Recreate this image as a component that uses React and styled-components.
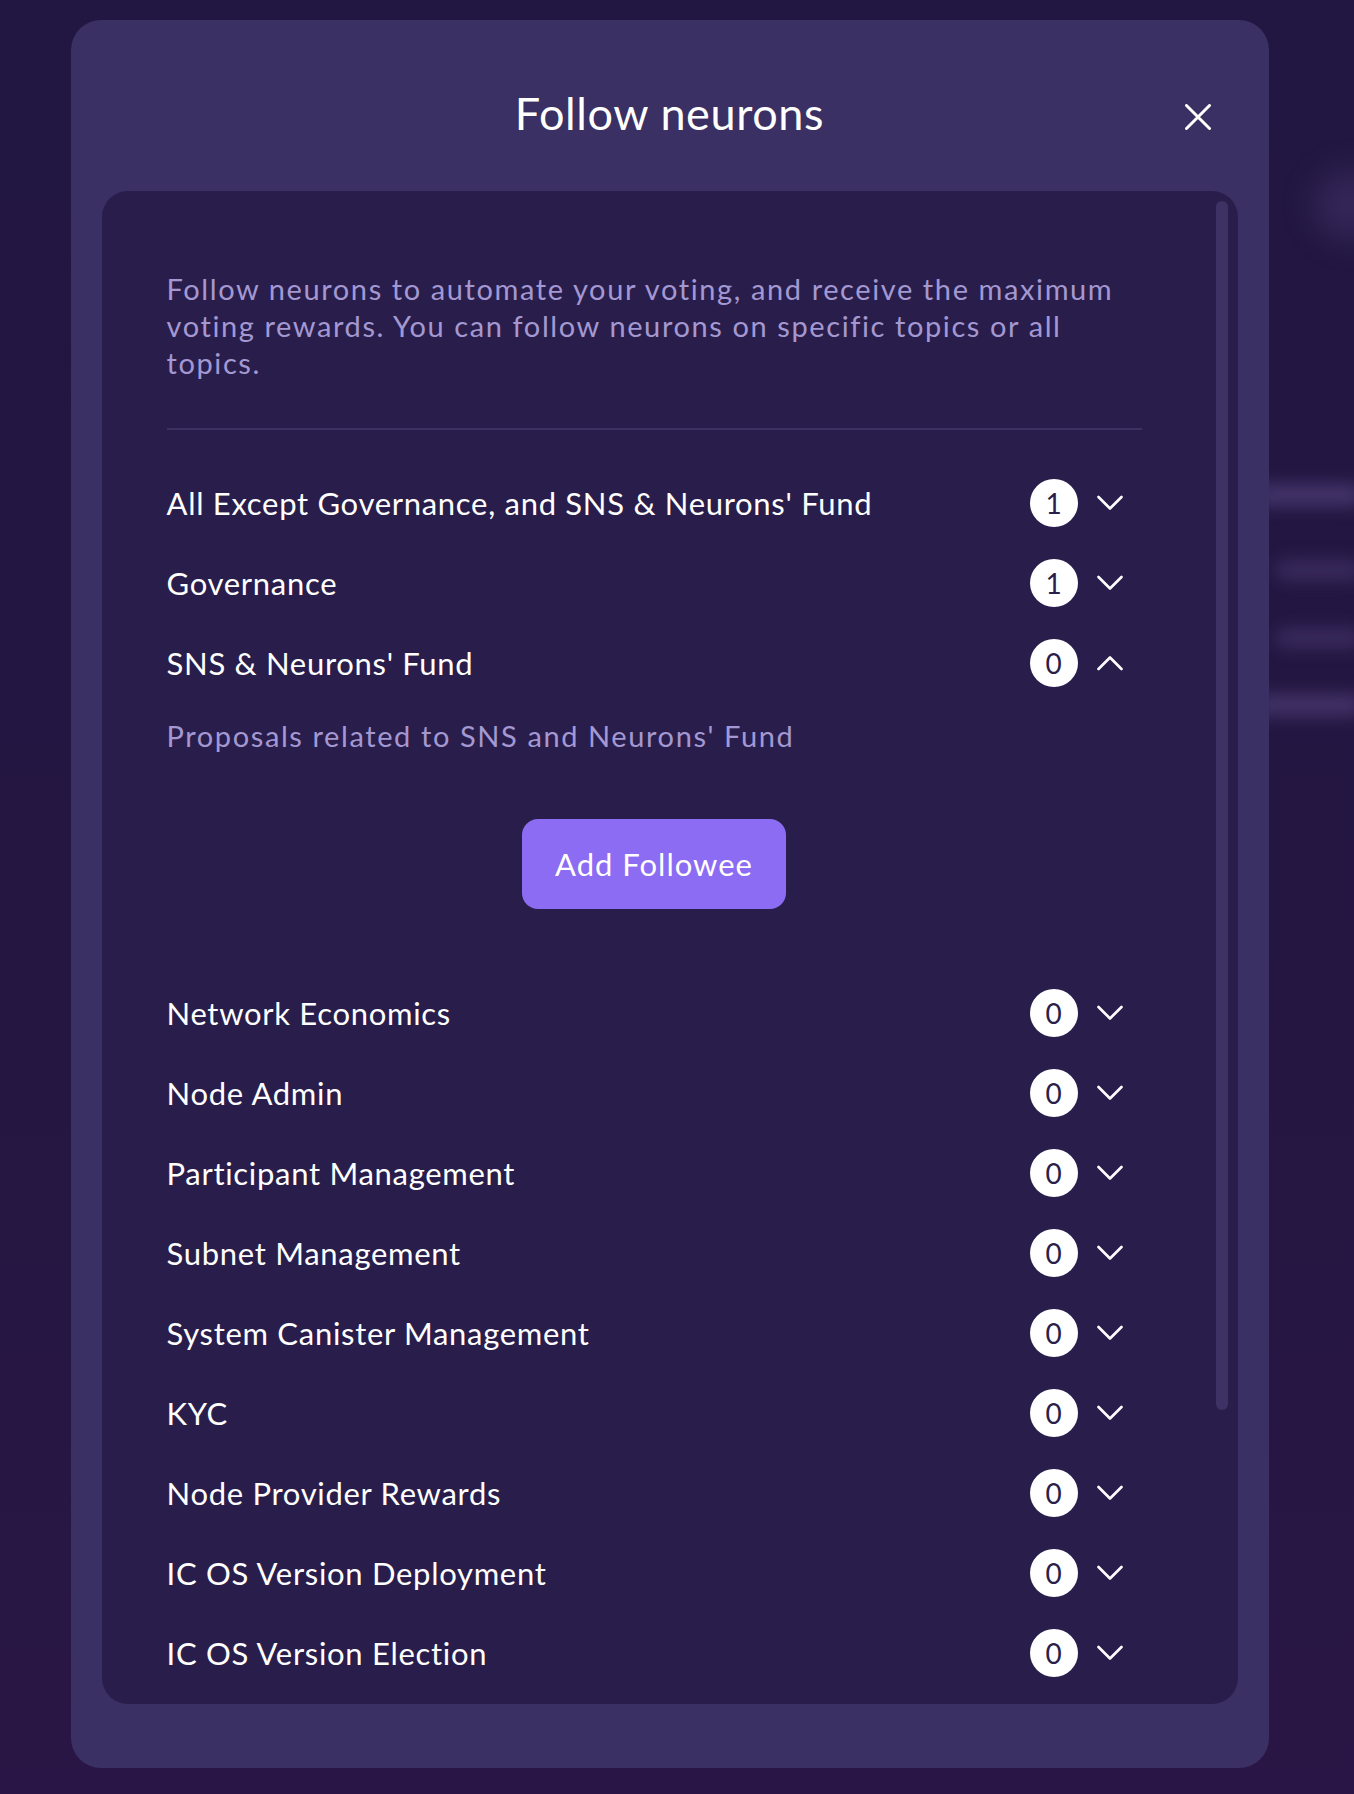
import React, { useState } from 'react';
import styled, { createGlobalStyle } from 'styled-components';

const GlobalStyle = createGlobalStyle`
  html, body {
    margin: 0;
    height: 100%;
  }
  body {
    background: #231640;
    font-family: Lato, 'Noto Sans', sans-serif;
    overflow: hidden;
  }
  * {
    box-sizing: border-box;
  }
`;

const topics = [
  { name: "All Except Governance, and SNS & Neurons' Fund", count: 1 },
  { name: 'Governance', count: 1 },
  {
    name: "SNS & Neurons' Fund",
    count: 0,
    description: "Proposals related to SNS and Neurons' Fund",
  },
  { name: 'Network Economics', count: 0 },
  { name: 'Node Admin', count: 0 },
  { name: 'Participant Management', count: 0 },
  { name: 'Subnet Management', count: 0 },
  { name: 'System Canister Management', count: 0 },
  { name: 'KYC', count: 0 },
  { name: 'Node Provider Rewards', count: 0 },
  { name: 'IC OS Version Deployment', count: 0 },
  { name: 'IC OS Version Election', count: 0 },
];

// blurred page that sits behind the modal
const BehindPage = styled.div`
  min-height: 100vh;
  background: linear-gradient(180deg, #221642 0%, #241641 60%, #2a1646 100%);
  display: flex;
  flex-direction: column;
  align-items: flex-end;
  padding-top: 170px;
`;

const Ghost = styled.div`
  width: ${(p) => p.$width}px;
  height: ${(p) => p.$height}px;
  margin-top: ${(p) => p.$gap}px;
  margin-right: ${(p) => p.$right || 0}px;
  border-radius: ${(p) => p.$height / 2}px;
  background: rgba(118, 98, 168, ${(p) => p.$alpha});
  filter: blur(${(p) => p.$blur || 9}px);
`;

const Overlay = styled.div`
  position: fixed;
  inset: 0;
  display: flex;
  justify-content: center;
  padding: 20px 15px 26px 0;
`;

const Modal = styled.section`
  width: 1198px;
  height: 100%;
  background: #3a3063;
  border-radius: 30px;
  padding: 0 31px 64px;
  display: flex;
  flex-direction: column;
`;

const Header = styled.header`
  height: 171px;
  flex-shrink: 0;
  display: grid;
  grid-template-columns: 1fr auto 1fr;
  align-items: start;
  padding-top: 65px;
`;

const Title = styled.h1`
  grid-column: 2;
  margin: 0;
  font-size: 45px;
  line-height: 56px;
  letter-spacing: 0.6px;
  font-weight: 400;
  color: #ffffff;
`;

const CloseButton = styled.button`
  grid-column: 3;
  justify-self: end;
  width: 44px;
  height: 44px;
  margin: 10px 18px 0 0;
  padding: 0;
  border: none;
  background: transparent;
  display: flex;
  align-items: center;
  justify-content: center;
  cursor: pointer;
`;

const Card = styled.div`
  flex: 1;
  min-height: 0;
  background: #291e4b;
  border-radius: 26px;
  padding: 10px 10px 10px 0;
  display: flex;
`;

const ScrollArea = styled.div`
  flex: 1;
  overflow-y: auto;
  scrollbar-width: none;
  padding: 69px 74px 40px 65px;

  &::-webkit-scrollbar {
    display: none;
  }
`;

const ScrollTrack = styled.div`
  width: 12px;
  flex-shrink: 0;
`;

const ScrollThumb = styled.div`
  height: 81%;
  border-radius: 6px;
  background: #3e3264;
`;

const Intro = styled.p`
  margin: 0;
  font-size: 29px;
  line-height: 37px;
  letter-spacing: 1.6px;
  color: #a498d2;
`;

const Divider = styled.hr`
  border: none;
  height: 2px;
  background: #3d3163;
  margin: 47px 0 33px;
`;

const Row = styled.div`
  height: 80px;
  display: flex;
  align-items: center;
  padding-right: 12px;
  cursor: pointer;
`;

const TopicName = styled.span`
  flex: 1;
  font-size: 31px;
  letter-spacing: 0.7px;
  color: #ffffff;
`;

const Badge = styled.span`
  width: 48px;
  height: 48px;
  border-radius: 50%;
  background: #ffffff;
  color: #2a1e4b;
  font-size: 28px;
  display: flex;
  align-items: center;
  justify-content: center;
`;

const ChevronBox = styled.span`
  width: 40px;
  height: 40px;
  margin-left: 12px;
  display: flex;
  align-items: center;
  justify-content: center;
  transform: ${(p) => (p.$open ? 'rotate(180deg)' : 'none')};
`;

const Panel = styled.div`
  padding: 14px 0 64px;
  display: flex;
  flex-direction: column;
`;

const PanelText = styled.p`
  margin: 0;
  font-size: 29px;
  line-height: 37px;
  letter-spacing: 1.6px;
  color: #a498d2;
`;

const AddButton = styled.button`
  align-self: center;
  margin-top: 65px;
  height: 90px;
  padding: 0 33px;
  border: none;
  border-radius: 16px;
  background: #8c6cf3;
  color: #ffffff;
  font-family: inherit;
  font-size: 31px;
  letter-spacing: 1px;
  cursor: pointer;
`;

const Chevron = () => (
  <svg width="26" height="16" viewBox="0 0 26 16" fill="none">
    <polyline
      points="1.5,2 13,13.5 24.5,2"
      stroke="#ffffff"
      strokeWidth="2.6"
      strokeLinecap="round"
      strokeLinejoin="round"
    />
  </svg>
);

const CloseIcon = () => (
  <svg width="26" height="26" viewBox="0 0 26 26" fill="none">
    <path d="M1.5 1.5 L24.5 24.5 M24.5 1.5 L1.5 24.5" stroke="#ffffff" strokeWidth="3" strokeLinecap="round" />
  </svg>
);

const App = () => {
  const [open, setOpen] = useState("SNS & Neurons' Fund");

  const toggle = (name) => {
    setOpen(open === name ? null : name);
  };

  return (
    <>
      <GlobalStyle />
      <BehindPage>
        <Ghost $width={70} $height={70} $gap={0} $right={-30} $alpha={0.22} $blur={16} />
        <Ghost $width={110} $height={20} $gap={245} $right={-10} $alpha={0.45} />
        <Ghost $width={90} $height={18} $gap={56} $right={-10} $alpha={0.3} />
        <Ghost $width={90} $height={18} $gap={50} $right={-10} $alpha={0.3} />
        <Ghost $width={110} $height={20} $gap={48} $right={-10} $alpha={0.42} />
      </BehindPage>
      <Overlay>
        <Modal>
          <Header>
            <Title>Follow neurons</Title>
            <CloseButton aria-label="Close">
              <CloseIcon />
            </CloseButton>
          </Header>
          <Card>
            <ScrollArea>
              <Intro>
                Follow neurons to automate your voting, and receive the maximum voting rewards. You can
                follow neurons on specific topics or all topics.
              </Intro>
              <Divider />
              {topics.map((topic) => (
                <div key={topic.name}>
                  <Row onClick={() => toggle(topic.name)}>
                    <TopicName>{topic.name}</TopicName>
                    <Badge>{topic.count}</Badge>
                    <ChevronBox $open={open === topic.name}>
                      <Chevron />
                    </ChevronBox>
                  </Row>
                  {open === topic.name && (
                    <Panel>
                      <PanelText>{topic.description || `Proposals related to ${topic.name}`}</PanelText>
                      <AddButton>Add Followee</AddButton>
                    </Panel>
                  )}
                </div>
              ))}
            </ScrollArea>
            <ScrollTrack>
              <ScrollThumb />
            </ScrollTrack>
          </Card>
        </Modal>
      </Overlay>
    </>
  );
};

export default App;
